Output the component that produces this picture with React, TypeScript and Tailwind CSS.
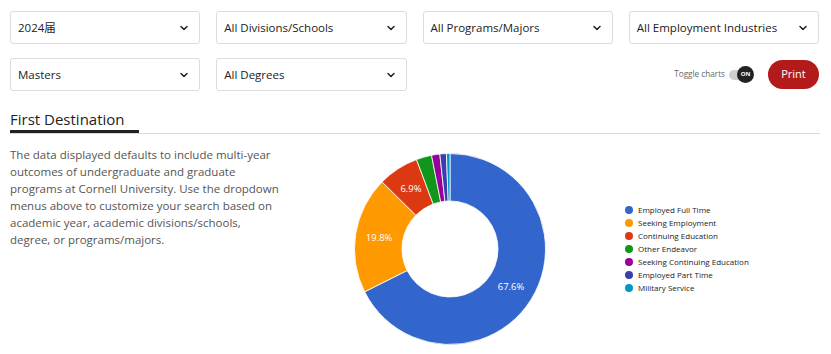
import { ChevronDown } from "lucide-react";

const font = { fontFamily: "'Open Sans', 'Noto Sans CJK SC', sans-serif" };

const slices = [
  { label: "Employed Full Time", value: 67.6, color: "#3366cc", show: true },
  { label: "Seeking Employment", value: 19.8, color: "#ff9900", show: true },
  { label: "Continuing Education", value: 6.9, color: "#dc3912", show: true },
  { label: "Other Endeavor", value: 2.6, color: "#109618", show: false },
  { label: "Seeking Continuing Education", value: 1.4, color: "#990099", show: false },
  { label: "Employed Part Time", value: 1.1, color: "#3b3eac", show: false },
  { label: "Military Service", value: 0.6, color: "#0099c6", show: false },
];

function Select({ value }: { value: string }) {
  return (
    <div className="flex h-[33px] items-center justify-between rounded-[3px] border border-[#dcdcdc] bg-white pl-[7px] pr-[9px] text-[11.5px] whitespace-nowrap text-[#222]">
      <span>{value}</span>
      <ChevronDown className="size-[12px] text-[#222]" strokeWidth={3} />
    </div>
  );
}

function polar(cx: number, cy: number, r: number, deg: number) {
  const a = (deg * Math.PI) / 180;
  return [cx + r * Math.sin(a), cy - r * Math.cos(a)];
}

function Donut() {
  const total = slices.reduce((s, x) => s + x.value, 0);
  const R = 95.5;
  const r = 48;
  let start = 0;
  return (
    <svg width="200" height="200" viewBox="0 0 200 200">
      {slices.map((s) => {
        const sweep = (s.value / total) * 360;
        const end = start + sweep;
        const large = sweep > 180 ? 1 : 0;
        const [x1, y1] = polar(100, 100, R, start);
        const [x2, y2] = polar(100, 100, R, end);
        const [x3, y3] = polar(100, 100, r, end);
        const [x4, y4] = polar(100, 100, r, start);
        const d = `M${x1} ${y1} A${R} ${R} 0 ${large} 1 ${x2} ${y2} L${x3} ${y3} A${r} ${r} 0 ${large} 0 ${x4} ${y4} Z`;
        const mid = start + sweep / 2;
        const [lx, ly] = polar(100, 100, (R + r) / 2, mid);
        start = end;
        return (
          <g key={s.label}>
            <path d={d} fill={s.color} stroke="#fff" strokeWidth="0.8" />
            {s.show && (
              <text
                x={lx}
                y={ly + 3.5}
                textAnchor="middle"
                fill="#fff"
                fontSize="9.5"
                style={font}
              >
                {s.value}%
              </text>
            )}
          </g>
        );
      })}
    </svg>
  );
}

export default function App() {
  return (
    <div className="min-h-[354px] bg-white px-[10px] pt-[11px]" style={font}>
      {/* Filters */}
      <div className="grid w-[809px] grid-cols-4 gap-x-[16px] gap-y-[14px]">
        <Select value="2024届" />
        <Select value="All Divisions/Schools" />
        <Select value="All Programs/Majors" />
        <Select value="All Employment Industries" />
        <Select value="Masters" />
        <Select value="All Degrees" />
        <div className="col-span-2 flex items-center justify-end">
          <span className="text-[8.2px] text-[#666]">Toggle charts</span>
          <div className="relative ml-[4px] h-[10px] w-[22px] rounded-full bg-[#cfcfcf]">
            <div className="absolute right-[-3px] top-[-3.5px] flex size-[17px] items-center justify-center rounded-full bg-[#222] text-[6px] font-bold text-white">
              ON
            </div>
          </div>
          <button className="ml-[17px] h-[29px] w-[51px] rounded-full bg-[#b31b1b] text-[11px] text-white">
            Print
          </button>
        </div>
      </div>

      {/* Heading */}
      <div className="mt-[16px] w-[810px] border-b border-[#d8d8d8]">
        <h2 className="inline-block border-b-[3px] border-[#222] pr-[14px] text-[15px] leading-[22px] text-[#222]">
          First Destination
        </h2>
      </div>

      <div className="flex items-start">
        <p className="mt-[12px] w-[271px] shrink-0 text-[11.5px] leading-[17px] text-[#555]">
          The data displayed defaults to include multi-year outcomes of
          undergraduate and graduate programs at Cornell University. Use the
          dropdown menus above to customize your search based on academic
          year, academic divisions/schools, degree, or programs/majors.
        </p>
        <div className="ml-[69px] mt-[15px]">
          <Donut />
        </div>
        <ul className="ml-[75px] mt-[71px] flex flex-col gap-[3px]">
          {slices.map((s) => (
            <li key={s.label} className="flex items-center gap-[5px] text-[8px] leading-[10px] text-[#222]">
              <span className="size-[8px] rounded-full" style={{ backgroundColor: s.color }} />
              {s.label}
            </li>
          ))}
        </ul>
      </div>
    </div>
  );
}
